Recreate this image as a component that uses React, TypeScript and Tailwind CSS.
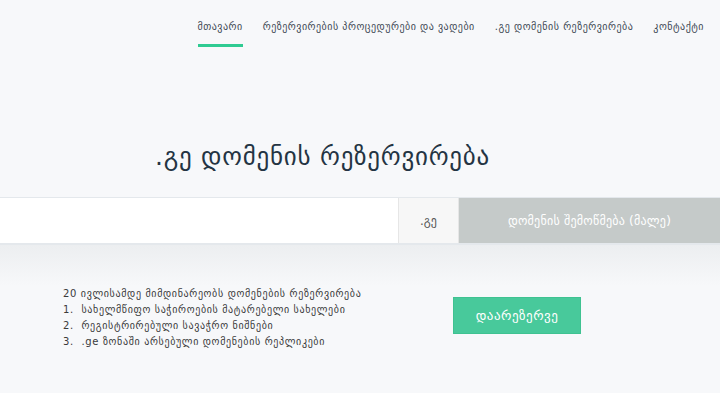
export default function App() {
  const nav = [
    { label: "მთავარი", active: true },
    { label: "რეზერვირების პროცედურები და ვადები" },
    { label: ".გე დომენის რეზერვირება" },
    { label: "კონტაქტი" },
  ];
  return (
    <div className="w-[720px] h-[393px] overflow-hidden bg-[#f7f8fa] text-[#2c3e50] font-['DejaVu_Sans',sans-serif]">
      {/* top navigation */}
      <header className="h-[60px] flex justify-end pr-4">
        <nav className="flex items-start gap-[20px] pt-[20px]">
          {nav.map((n) => (
            <a
              key={n.label}
              href="#"
              className="flex flex-col text-[10px] tracking-[0.05em] text-[#3f4a55]"
            >
              <span className="leading-[14px]">{n.label}</span>
              {n.active && <span className="mt-[10px] h-[3px] w-full bg-[#2fcb92]"></span>}
            </a>
          ))}
        </nav>
      </header>

      <h1 className="pl-[155px] mt-[82px] text-[25px] leading-[30px] font-normal tracking-[0.03em] text-[#243443]">
        .გე დომენის რეზერვირება
      </h1>

      {/* search band */}
      <div className="mt-[25px] flex h-[48px] border-t border-b-2 border-[#e4e8ec] bg-white">
        <input className="w-[398px] h-full outline-none bg-white" />
        <div className="w-[60px] flex items-center justify-center bg-[#f7f7f7] border-l border-[#e6e6e6] text-[12px] text-[#555]">
          .გე
        </div>
        <button className="flex-1 bg-[#c5cac9] border-l border-[#e6e6e6] text-white text-[12px] tracking-[0.02em]">
          დომენის შემოწმება (მალე)
        </button>
      </div>

      <div className="bg-gradient-to-b from-[#eceef0] to-[#f7f8fa] h-[41px]"></div>

      <section className="flex items-start">
        <div className="pl-[63px] w-[453px] text-[10px] leading-[16px] tracking-[0.065em] text-[#3a3a3a]">
          <p>20 ივლისამდე მიმდინარეობს დომენების რეზერვირება</p>
          <ol>
            <li>1.&nbsp; სახელმწიფო საჭიროების მატარებელი სახელები</li>
            <li>2.&nbsp; რეგისტრირებული სავაჭრო ნიშნები</li>
            <li>3.&nbsp; .ge ზონაში არსებული დომენების რეპლიკები</li>
          </ol>
        </div>
        <button className="mt-[11px] w-[128px] h-[37px] bg-[#48c99b] border border-[#3fc291] text-white text-[13px] tracking-[0.04em]">
          დაარეზერვე
        </button>
      </section>
    </div>
  );
}
